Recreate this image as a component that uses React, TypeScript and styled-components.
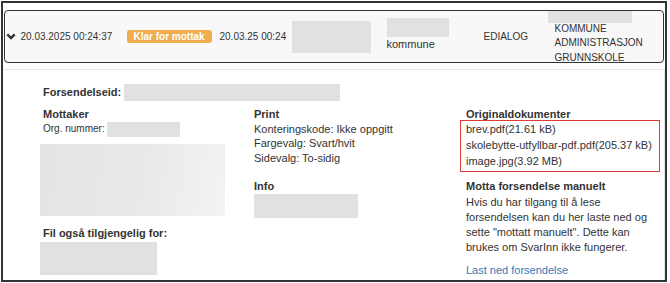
import React from 'react';
import styled, { createGlobalStyle } from 'styled-components';

const GlobalStyle = createGlobalStyle`
  body {
    margin: 0;
    background: #fff;
    font-family: 'Liberation Sans', Arial, sans-serif;
    color: #333;
  }
`;

const Frame = styled.div`
  box-sizing: border-box;
  width: 666px;
  height: 281px;
  margin: 1px;
  border: 2px solid #333;
  overflow: hidden;
`;

const HeaderRow = styled.div`
  box-sizing: border-box;
  display: flex;
  align-items: center;
  height: 53px;
  margin: 7px 1px 0 1px;
  border: 1.5px solid #333;
  border-radius: 4px;
  background: #f8f8f8;
  overflow: hidden;
  font-size: 10px;
  line-height: 14px;
`;

const Cell = styled.div<{ $w?: number }>`
  flex: ${(p) => (p.$w ? `0 0 ${p.$w}px` : '1 1 auto')};
  display: flex;
  align-items: center;
  white-space: nowrap;
`;

const StackCell = styled.div<{ $w?: number }>`
  flex: ${(p) => (p.$w ? `0 0 ${p.$w}px` : '1 1 auto')};
  display: flex;
  flex-direction: column;
  align-items: flex-start;
  padding-bottom: 4px;
  font-size: 11px;
`;

const TopCell = styled.div`
  flex: 1 1 auto;
  align-self: flex-start;
  display: flex;
  flex-direction: column;
  font-size: 10px;
  line-height: 14.5px;
`;

const TopLines = styled.div`
  padding-left: 7px;
  margin-top: -1.5px;
`;

const Badge = styled.span`
  display: inline-block;
  height: 13px;
  line-height: 13px;
  padding: 0 7px;
  border-radius: 3px;
  background: #f0ad4e;
  color: #fff;
  font-weight: bold;
  font-size: 10px;
`;

const Blur = styled.div<{ $w: number; $h: number }>`
  flex: 0 0 auto;
  width: ${(p) => p.$w}px;
  height: ${(p) => p.$h}px;
  background: #e1e1e1;
`;

const SoftBlur = styled(Blur)`
  background: linear-gradient(100deg, #e4e4e4 0%, #e9e9e9 55%, #f3f3f3 100%);
`;

const Details = styled.div`
  margin-top: 6px;
  border-top: 1px solid #e6e6e6;
  border-right: 1px solid #e6e6e6;
  height: 100%;
  padding: 14px 0 0 40px;
  font-size: 11px;
  line-height: 14.67px;
`;

const IdRow = styled.div`
  display: flex;
  align-items: center;
  height: 17px;
  gap: 3px;
`;

const Label = styled.span`
  font-weight: bold;
`;

const Columns = styled.div`
  display: grid;
  grid-template-columns: 211px 212px 197px;
  margin-top: 6px;
`;

const Column = styled.div`
  display: flex;
  flex-direction: column;
  align-items: flex-start;
`;

const Heading = styled.div<{ $gap?: number }>`
  font-weight: bold;
  margin-top: ${(p) => p.$gap ?? 0}px;
`;

const OrgRow = styled.div`
  display: flex;
  align-items: center;
  height: 15px;
  gap: 2px;
`;

const OrgLabel = styled.span`
  font-size: 10px;
`;

const Shifted = styled.div<{ $top: number }>`
  margin: ${(p) => p.$top}px 0 0 -3px;
`;

const DocBox = styled.div`
  margin: -2px 0 0 -6px;
  padding: 0 0 2px 5px;
  width: 200px;
  box-sizing: border-box;
  border: 1px solid #de3b3b;
  line-height: 16px;
`;

const Para = styled.p`
  margin: 2px 0 0;
  line-height: 15px;
`;

const Link = styled.a`
  margin-top: 8px;
  color: #337ab7;
  text-decoration: none;
  line-height: 15px;
`;

function Chevron() {
  return (
    <svg width="10" height="7" viewBox="0 0 10 7" style={{ marginLeft: 1 }}>
      <polyline points="1.3,1.3 5,5 8.7,1.3" fill="none" stroke="#333" strokeWidth="2.4" />
    </svg>
  );
}

export default function App() {
  return (
    <>
      <GlobalStyle />
      <Frame>
        <HeaderRow>
          <Cell $w={15.5}>
            <Chevron />
          </Cell>
          <Cell $w={106}>20.03.2025 00:24:37</Cell>
          <Cell $w={93}>
            <Badge>Klar for mottak</Badge>
          </Cell>
          <Cell $w={72}>20.03.25 00:24</Cell>
          <Cell $w={95}>
            <Blur $w={79} $h={32} />
          </Cell>
          <StackCell $w={97}>
            <Blur $w={62} $h={19} />
            <span>kommune</span>
          </StackCell>
          <Cell $w={64}>EDIALOG</Cell>
          <TopCell>
            <Blur $w={84} $h={12} />
            <TopLines>
              KOMMUNE
              <br />
              ADMINISTRASJON
              <br />
              GRUNNSKOLE
            </TopLines>
          </TopCell>
        </HeaderRow>

        <Details>
          <IdRow>
            <Label>Forsendelseid:</Label>
            <Blur $w={216} $h={17} />
          </IdRow>
          <Columns>
            <Column>
              <Heading>Mottaker</Heading>
              <OrgRow>
                <OrgLabel>Org. nummer:</OrgLabel>
                <Blur $w={73} $h={15} />
              </OrgRow>
              <Shifted $top={7}>
                <SoftBlur $w={185} $h={72} />
              </Shifted>
              <Heading $gap={10}>Fil også tilgjengelig for:</Heading>
              <Shifted $top={2}>
                <Blur $w={117} $h={33} />
              </Shifted>
            </Column>
            <Column>
              <Heading>Print</Heading>
              <div>Konteringskode: Ikke oppgitt</div>
              <div>Fargevalg: Svart/hvit</div>
              <div>Sidevalg: To-sidig</div>
              <Heading $gap={13}>Info</Heading>
              <Blur $w={104} $h={24} style={{ marginTop: 1 }} />
            </Column>
            <Column>
              <Heading>Originaldokumenter</Heading>
              <DocBox>
                <div>brev.pdf(21.61 kB)</div>
                <div>skolebytte-utfyllbar-pdf.pdf(205.37 kB)</div>
                <div>image.jpg(3.92 MB)</div>
              </DocBox>
              <Heading $gap={7}>Motta forsendelse manuelt</Heading>
              <Para>
                Hvis du har tilgang til å lese
                <br />
                forsendelsen kan du her laste ned og
                <br />
                sette "mottatt manuelt". Dette kan
                <br />
                brukes om SvarInn ikke fungerer.
              </Para>
              <Link href="#">Last ned forsendelse</Link>
            </Column>
          </Columns>
        </Details>
      </Frame>
    </>
  );
}
